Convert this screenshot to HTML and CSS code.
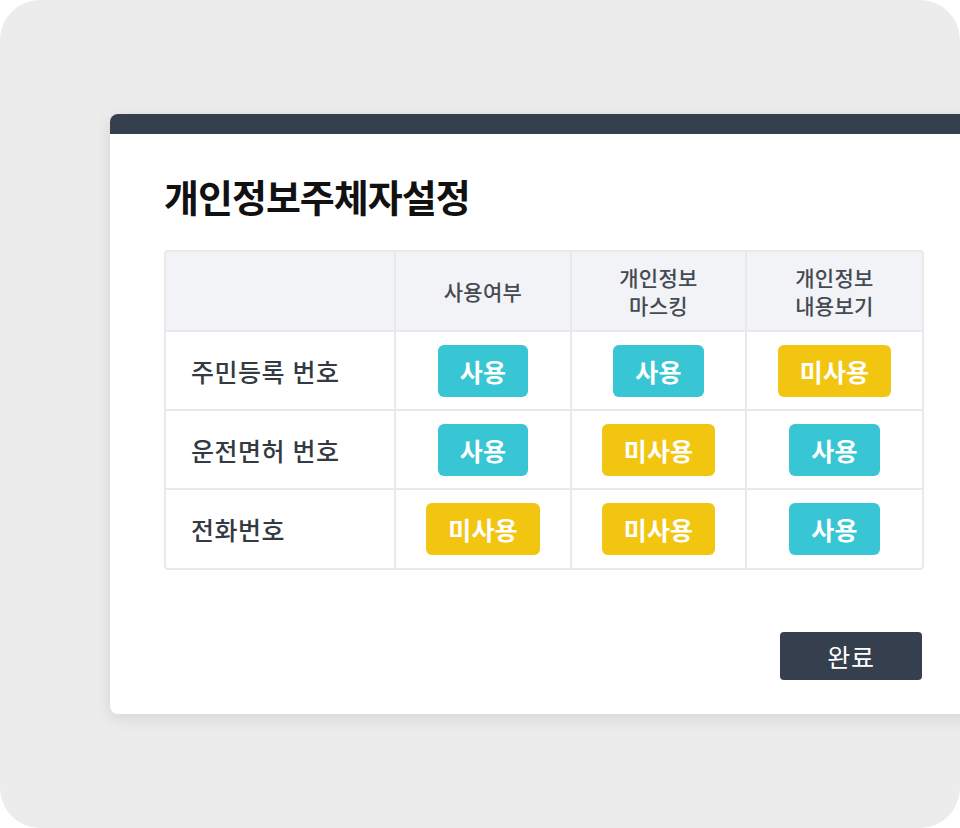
FILE: index.html
```html
<!DOCTYPE html>
<html lang="ko">
<head>
<meta charset="utf-8">
<link rel="stylesheet" href="styles.css">
</head>
<body>
<div class="frame">
  <div class="card">
    <div class="bar"></div>
    <div class="content">
      <h1 class="title">개인정보주체자설정</h1>
      <div class="table">
        <div class="cell head"></div>
        <div class="cell head">사용여부</div>
        <div class="cell head">개인정보<br>마스킹</div>
        <div class="cell head">개인정보<br>내용보기</div>

        <div class="cell label">주민등록 번호</div>
        <div class="cell"><span class="badge on">사용</span></div>
        <div class="cell"><span class="badge on">사용</span></div>
        <div class="cell"><span class="badge off">미사용</span></div>

        <div class="cell label">운전면허 번호</div>
        <div class="cell"><span class="badge on">사용</span></div>
        <div class="cell"><span class="badge off">미사용</span></div>
        <div class="cell"><span class="badge on">사용</span></div>

        <div class="cell label">전화번호</div>
        <div class="cell"><span class="badge off">미사용</span></div>
        <div class="cell"><span class="badge off">미사용</span></div>
        <div class="cell"><span class="badge on">사용</span></div>
      </div>
      <div class="footer">
        <button class="done">완료</button>
      </div>
    </div>
  </div>
</div>
</body>
</html>
```

FILE: styles.css
```css
* { box-sizing: border-box; }
html, body {
  margin: 0;
  background: #ffffff;
}
body {
  font-family: "Noto Sans CJK KR", "Noto Sans", sans-serif;
}
.frame {
  width: 960px;
  height: 828px;
  background: #ececec;
  border-radius: 40px;
  overflow: hidden;
  padding: 114px 0 0 110px;
}
.card {
  width: 900px;
  background: #ffffff;
  border-radius: 8px;
  box-shadow: 0 4px 16px rgba(0, 0, 0, 0.10);
  overflow: hidden;
}
.bar {
  height: 20px;
  background: #353f4d;
}
.content {
  padding: 37px 0 34px 54px;
}
.title {
  margin: 0;
  height: 79px;
  font-size: 38px;
  line-height: 50px;
  font-weight: 700;
  letter-spacing: -1px;
  color: #111111;
}
.table {
  width: 760px;
  border: 2px solid #e9e9eb;
  border-radius: 4px;
  background: #e9e9eb;
  display: grid;
  grid-template-columns: 228px 174px 173px 175px;
  grid-template-rows: 78px 77px 77px 78px;
  gap: 2px;
  overflow: hidden;
}
.cell {
  background: #ffffff;
  display: flex;
  align-items: center;
  justify-content: center;
}
.cell.head {
  background: #f2f3f7;
  font-size: 21px;
  line-height: 28px;
  font-weight: 500;
  letter-spacing: 0.3px;
  color: #454a52;
  text-align: center;
}
.cell.label {
  justify-content: flex-start;
  padding-left: 25px;
  font-size: 25px;
  font-weight: 500;
  letter-spacing: 0.5px;
  color: #343a42;
}
.badge {
  display: inline-flex;
  align-items: center;
  justify-content: center;
  height: 52px;
  padding: 0 22px;
  border-radius: 6px;
  font-size: 25px;
  font-weight: 700;
  letter-spacing: 0.2px;
  color: #ffffff;
}
.badge.on { background: #38c6d4; }
.badge.off { background: #f2c511; }
.footer {
  width: 758px;
  display: flex;
  justify-content: flex-end;
  padding-top: 62px;
}
.done {
  width: 142px;
  height: 48px;
  border: none;
  border-radius: 4px;
  background: #353f4d;
  color: #ffffff;
  font-family: "Noto Sans CJK KR", "Noto Sans", sans-serif;
  font-size: 25px;
  letter-spacing: 0.8px;
  padding: 0;
}
```
